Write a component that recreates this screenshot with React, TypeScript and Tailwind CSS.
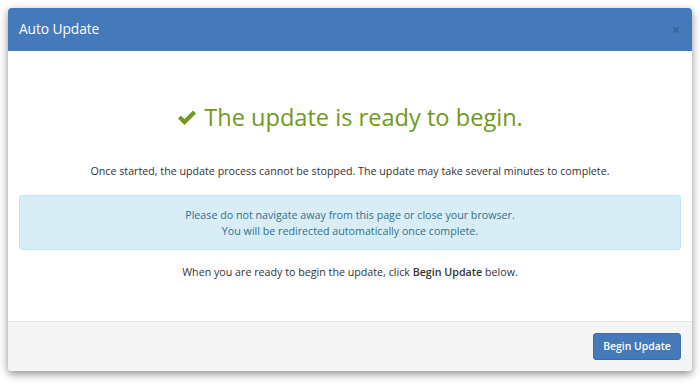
export default function App() {
  return (
    <div className="min-h-screen bg-white p-2 pr-2 font-['Open_Sans',sans-serif]">
      <div className="w-[684px] h-[363px] flex flex-col rounded-[4px] shadow-[0_3px_9px_rgba(0,0,0,0.45)] overflow-hidden bg-white">
        {/* Header */}
        <div className="h-[43px] bg-[#4479ba] flex items-center justify-between pl-[11px] pr-[12px]">
          <h4 className="text-white text-[13.8px] tracking-[-0.1px]">Auto Update</h4>
          <button className="text-[#2f5d94] text-[15px] leading-none">×</button>
        </div>

        {/* Body */}
        <div className="flex-1 flex flex-col items-center px-[11px] pt-[51px]">
          <h2 className="flex items-center gap-[7px] text-[#6f9a1b] text-[23.6px] leading-[30px]">
            <svg width="20" height="16" viewBox="0 0 20 16" className="mt-[1px]">
              <path d="M1 8.5 L4 5.5 L7.5 9 L16 0.5 L19 3.5 L7.5 15 Z" fill="#6f9a1b" />
            </svg>
            The update is ready to begin.
          </h2>
          <p className="text-[#333] text-[10.7px] leading-[18px] mt-[30px]">
            Once started, the update process cannot be stopped. The update may take several minutes to complete.
          </p>
          <div className="w-full mt-[15px] h-[55px] bg-[#d9edf7] border border-[#bce8f1] rounded-[3px] flex flex-col items-center justify-center text-[#31708f] text-[10.7px] leading-[16px]">
            <span>Please do not navigate away from this page or close your browser.</span>
            <span>You will be redirected automatically once complete.</span>
          </div>
          <p className="text-[#333] text-[10.7px] leading-[18px] mt-[13px]">
            When you are ready to begin the update, click <b className="font-semibold">Begin Update</b> below.
          </p>
        </div>

        {/* Footer */}
        <div className="h-[50px] bg-[#f5f5f5] border-t border-[#e5e5e5] flex items-center justify-end pr-[11px]">
          <button className="h-[27px] w-[88px] bg-[#4479ba] border border-[#3b6da9] rounded-[3px] text-white text-[10.4px] font-semibold">
            Begin Update
          </button>
        </div>
      </div>
    </div>
  )
}
